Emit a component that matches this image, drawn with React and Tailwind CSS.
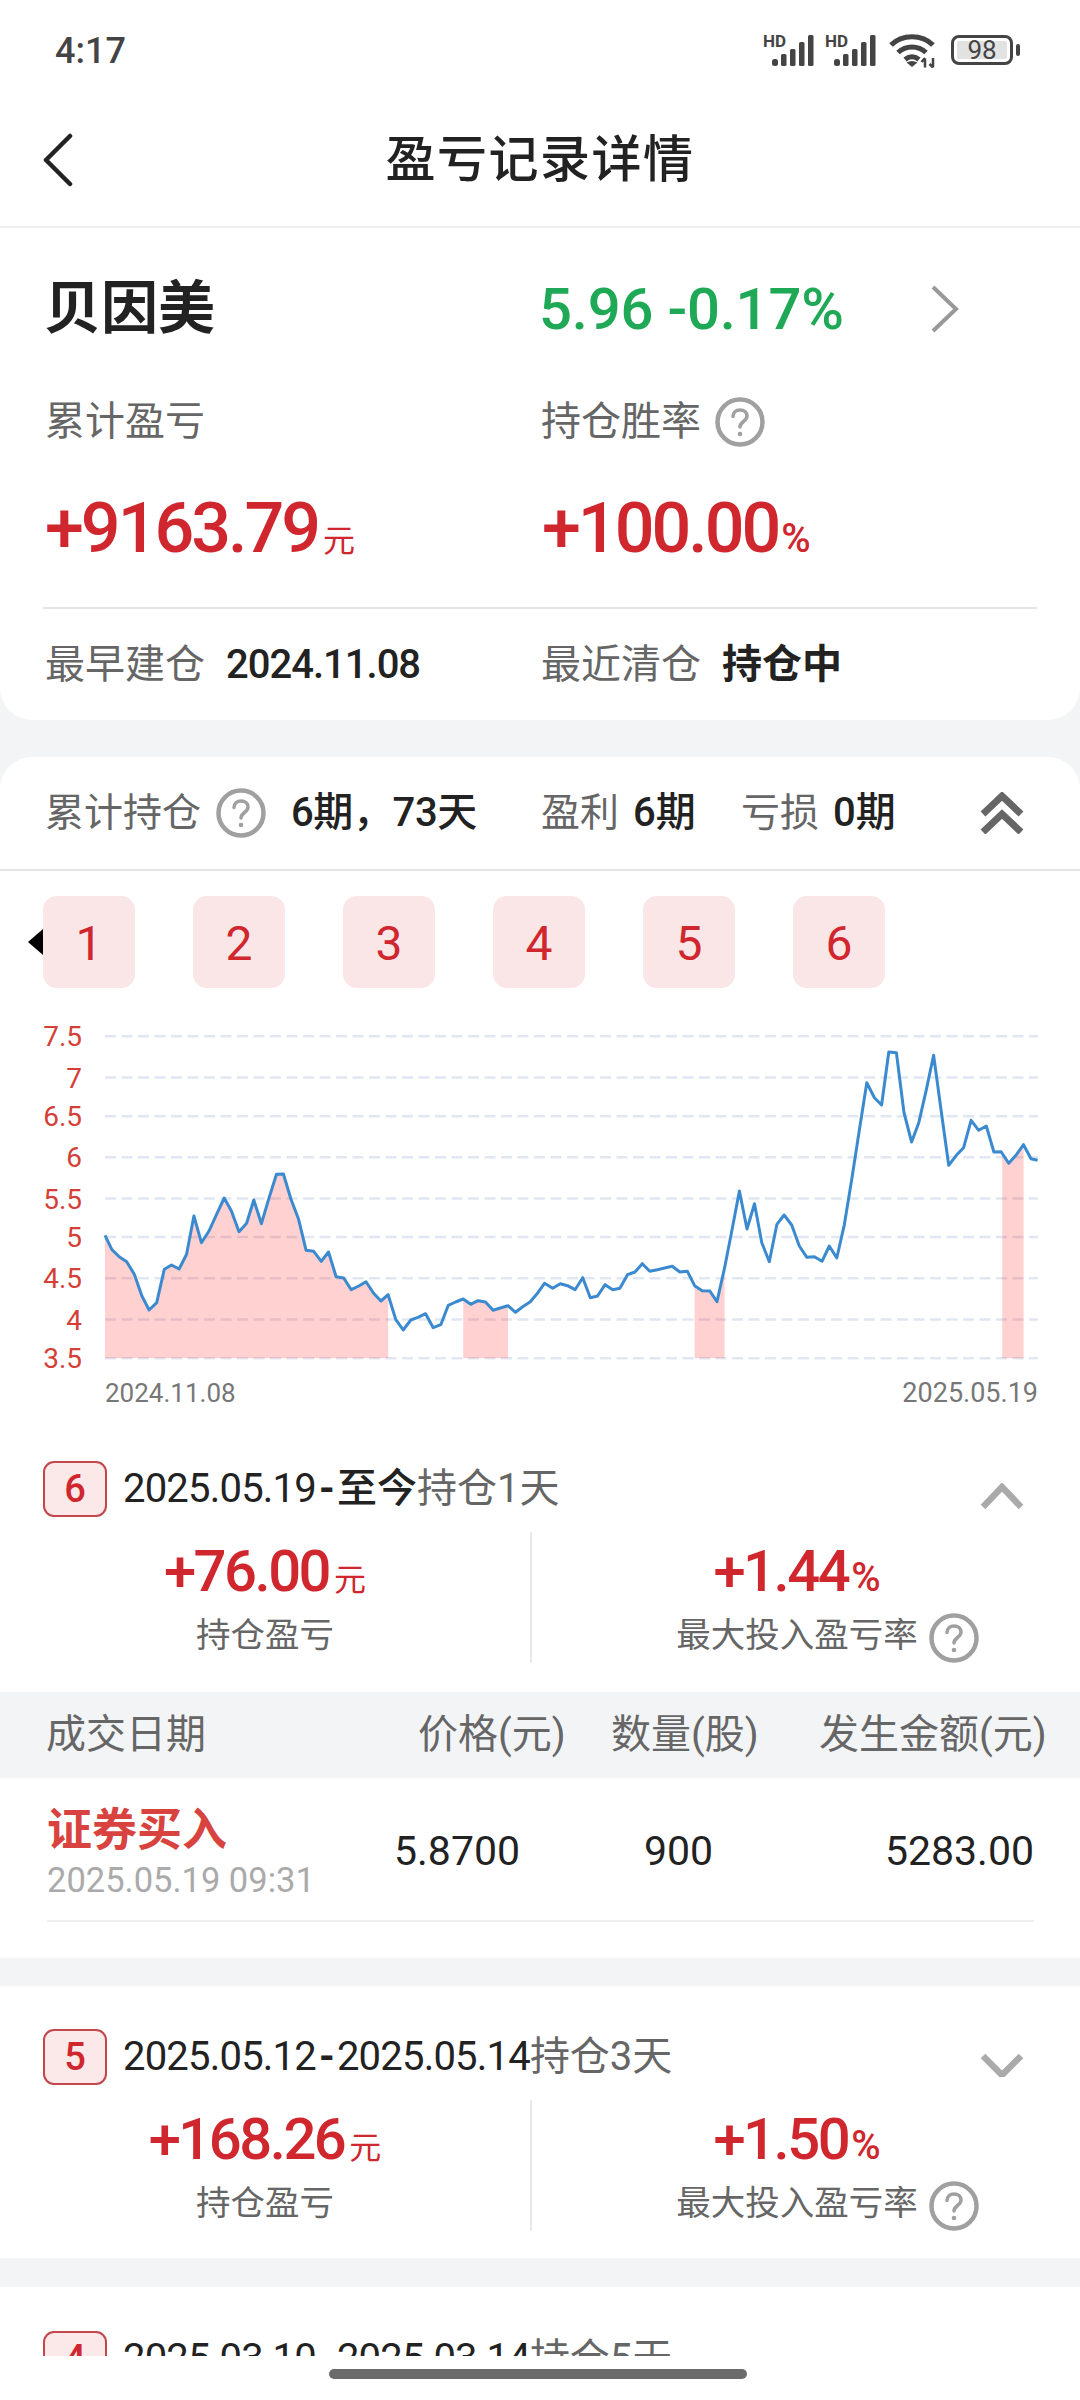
import React from 'react';

const RED = 'text-[#d0262e]';

// 图表数据: [u, v] 是参考图放大坐标，换算成 svg 坐标
const leftPts = [[305,703],[325,746],[347,768],[368,782],[390,820],[412,885],[433,927],[455,905],[477,805],[498,792],[520,804],[542,760],[563,645],[585,725],[607,690],[629,640],[651,591],[672,630],[694,692],[716,667],[737,597],[759,668],[781,592],[803,520],[823,519],[845,595],[867,655],[889,748],[911,751],[933,781],[954,753],[976,827],[998,831],[1020,866],[1042,855],[1063,842],[1085,877],[1106,900],[1127,881],[1149,955],[1171,987],[1193,957],[1214,949],[1236,938],[1258,980],[1280,971],[1302,913],[1323,903],[1345,894],[1367,910],[1388,899],[1410,903],[1432,928],[1453,921],[1475,914],[1497,934],[1518,917],[1540,902],[1562,875]];
const rightPts = [[13,847],[37,862],[59,848],[80,854],[102,866],[124,830],[146,890],[167,885],[189,851],[211,866],[232,862],[254,821],[276,813],[297,788],[319,811],[341,806],[362,801],[384,796],[406,813],[428,811],[449,854],[471,869],[493,870],[514,902],[536,800],[557,690],[579,570],[601,684],[623,608],[644,725],[666,782],[688,670],[709,642],[731,672],[753,735],[775,769],[797,767],[819,781],[840,735],[862,771],[884,670],[906,530],[927,390],[949,245],[971,290],[992,312],[1013,153],[1035,155],[1057,335],[1079,423],[1100,365],[1122,265],[1143,163],[1165,330],[1187,493],[1209,463],[1230,440],[1252,358],[1274,388],[1296,375],[1318,453],[1339,452],[1361,487],[1383,462],[1404,431],[1426,473],[1445,478]];

const toXY = (p, off) => [off + p[0] / 2.904, p[1] / 3];
const line = [...leftPts.map((p) => toXY(p, 0)), ...rightPts.map((p) => toXY(p, 540))];
const fmt = (p) => `${p[0].toFixed(1)},${p[1].toFixed(1)}`;
const linePath = line.map(fmt).join(' ');

const BASE = 357.3;
const gridY = [35.3, 76.6, 115.3, 156.3, 197.6, 236, 277.3, 318.6, 357.3];
const yLabels = ['7.5', '7', '6.5', '6', '5.5', '5', '4.5', '4', '3.5'];

const yAt = (x) => {
  for (let i = 1; i < line.length; i++) {
    if (x <= line[i][0]) {
      const [a, b] = [line[i - 1], line[i]];
      return a[1] + ((x - a[0]) / (b[0] - a[0])) * (b[1] - a[1]);
    }
  }
  return line[line.length - 1][1];
};

// 持仓区间: 两端竖直，上沿沿折线
const area = (x1, x2) => {
  const inside = line.filter((p) => p[0] > x1 && p[0] < x2);
  const top = [[x1, yAt(x1)], ...inside, [x2, yAt(x2)]].map(fmt).join(' ');
  return `${x1},${BASE} ${top} ${x2},${BASE}`;
};
const areas = [area(105, 388.2), area(463.2, 508), area(694.6, 724.6), area(1002.2, 1023.6)];

const Help = ({ className = 'w-[50px] h-[50px]' }) => (
  <svg viewBox="0 0 50 50" className={className} fill="none">
    <circle cx="25" cy="25" r="22.5" stroke="#a0a0a0" strokeWidth="4.500" />
    <path d="M18 19.5c0-4 3-6.500 7-6.500s7 2.500 7 6c0 5.500-7 5.500-7 11" stroke="#a0a0a0" strokeWidth="3.500" strokeLinecap="round" />
    <circle cx="25" cy="37" r="2.300" fill="#a0a0a0" />
  </svg>
);

const Signal = () => (
  <svg viewBox="0 -6 52 40" className="w-[52px] h-[40px]" fill="#444">
    <text x="0" y="14" fontSize="17" fontWeight="700" fontFamily="Roboto, sans-serif">HD</text>
    <rect x="9" y="26" width="6" height="7" rx="2.500" />
    <rect x="18" y="21" width="5.500" height="12" rx="1.500" />
    <rect x="27" y="16" width="5.500" height="17" rx="1.500" />
    <rect x="36" y="9" width="5.500" height="24" rx="1.500" />
    <rect x="45" y="2" width="5.500" height="31" rx="1.500" />
  </svg>
);

const Wifi = () => (
  <svg viewBox="0 0 50 36" className="w-[50px] h-[36px]" fill="none" stroke="#444" strokeWidth="5">
    <path d="M3 13C14 2 34 2 45 13" />
    <path d="M10 20.500c8-7.500 20-7.500 28 0" />
    <path d="M17 27.500c4.500-3.500 9.500-3.500 14 0" />
    <path d="M18.500 30.500c3.500-2 7.500-2 11 0L24 35z" fill="#444" stroke="none" />
    <path d="M37 35.500v-9M33.500 30l3.500-4M45 26v9.500M41.500 32l3.500 3.500" strokeWidth="2.500" />
  </svg>
);

const BackIcon = () => (
  <svg viewBox="0 0 32 54" className="w-[32px] h-[54px]" fill="none" stroke="#222" strokeWidth="4.500" strokeLinecap="round" strokeLinejoin="round">
    <path d="M28 3L4 27l24 24" />
  </svg>
);

const Chevron = ({ dir }) => (
  <svg viewBox="0 0 44 26" className="w-[44px] h-[26px]" fill="none" stroke="#aaa" strokeWidth="6.500" strokeLinejoin="miter">
    <path d={dir === 'up' ? 'M3 24L22 4l19 20' : 'M3 5l19 19L41 5'} />
  </svg>
);

const Stat = ({ value, unit }) => (
  <div className={`flex items-baseline h-[78px] leading-[78px] ${RED}`}>
    <span className="text-[58px] font-medium tracking-[-2.5px]">{value}</span>
    <span className={unit === '%' ? 'text-[40px] font-medium ml-[3px]' : 'text-[32px] ml-[5px]'}>{unit}</span>
  </div>
);

const PeriodHeader = ({ no, from, to, strong, tail, dir }) => (
  <div className="flex items-center pl-[43px] pr-[56px] h-[56px]">
    <div className={`w-[64px] h-[56px] border-2 border-[#c2474c] rounded-[11px] bg-[#fbe8e9] flex items-center justify-center text-[38px] font-medium ${RED}`}>{no}</div>
    <div className="ml-[16px] text-[40px] leading-[56px] text-[#222] flex-1 whitespace-nowrap tracking-[-0.8px]">
      {from}<span className="font-bold mx-[3px]">-</span>{to}<span className="font-medium tracking-normal">{strong}</span><span className="text-[#666] tracking-normal">{tail}</span>
    </div>
    <div className="mt-[14px]"><Chevron dir={dir} /></div>
  </div>
);

const PeriodStats = ({ money, rate }) => (
  <div className="flex mt-[15px] h-[131px]">
    <div className="w-[530px] flex flex-col items-center">
      <Stat value={money} unit="元" />
      <div className="text-[34.5px] leading-[50px] text-[#666]">持仓盈亏</div>
    </div>
    <div className="w-[2px] bg-[#e8e8e8]" />
    <div className="w-[530px] flex flex-col items-center">
      <Stat value={rate} unit="%" />
      <div className="relative text-[34.5px] leading-[50px] text-[#666] whitespace-nowrap">
        最大投入盈亏率
        <div className="absolute left-full ml-[11px] top-[3px]"><Help /></div>
      </div>
    </div>
  </div>
);

const Chart = () => (
  <svg viewBox="0 0 1080 410" className="block w-[1080px] h-[410px] mt-[13px]">
    {gridY.map((y) => (
      <line key={y} x1="105" x2="1038" y1={y} y2={y} stroke="#e1e7f2" strokeWidth="2.500" strokeDasharray="11 5.500" />
    ))}
    {areas.map((pts) => (
      <polygon key={pts} points={pts} fill="#f00" fillOpacity="0.18" />
    ))}
    <polyline points={linePath} fill="none" stroke="#3b8ad0" strokeWidth="3" strokeLinejoin="round" />
    {gridY.map((y, i) => (
      <text key={y} x="82" y={y + 10} textAnchor="end" fontSize="28" fill="#d43f38">{yLabels[i]}</text>
    ))}
    <text x="105" y="401" fontSize="26" fill="#777">2024.11.08</text>
    <text x="1038" y="401" fontSize="27" fill="#777" textAnchor="end">2025.05.19</text>
  </svg>
);

export default function App() {
  return (
    <div className="w-[1080px] h-[2400px] flex flex-col overflow-hidden bg-[#f3f4f6] font-['Roboto','Noto_Sans_CJK_SC',sans-serif]">
      <div className="flex-1 min-h-0 overflow-hidden">
        {/* 状态栏 */}
        <div className="h-[94px] bg-white flex items-center pl-[55px] pr-[60px]">
          <span className="text-[36px] font-medium text-[#444] flex-1 mt-[8px]">4:17</span>
          <div className="flex items-center mt-[6px]">
            <div className="-mt-[6px]"><Signal /></div>
            <div className="ml-[10px] -mt-[6px]"><Signal /></div>
            <div className="ml-[11px]"><Wifi /></div>
            <div className="ml-[13px] w-[62px] h-[30px] border-[3px] border-[#444] rounded-[8px] p-[3px]">
              <div className="w-full h-full bg-[#e2e2e2] rounded-[2px] flex items-center justify-center text-[26px] leading-none text-[#444]">98</div>
            </div>
            <div className="ml-[3px] w-[4px] h-[12px] bg-[#444] rounded-[2px]" />
          </div>
        </div>
        {/* 标题栏 */}
        <div className="relative h-[134px] bg-white border-b-2 border-[#eee] flex items-center justify-center">
          <div className="absolute left-[42px] top-[39px]"><BackIcon /></div>
          <h1 className="text-[50px] font-medium text-[#222] tracking-[1.5px]">盈亏记录详情</h1>
        </div>

        {/* 概览 */}
        <div className="bg-white rounded-b-[32px] pt-[41px] pb-[25px]">
          <div className="flex items-center h-[80px] pl-[44px]">
            <div className="w-[495px] text-[57px] font-bold text-[#222]">贝因美</div>
            <div className="w-[391px] text-[58px] font-medium text-[#1fa855] tracking-[-0.2px]">5.96 -0.17%</div>
            <svg viewBox="0 0 30 48" className="w-[30px] h-[48px]" fill="none" stroke="#999" strokeWidth="4"><path d="M3 2l23 22L3 46" /></svg>
          </div>
          <div className="flex items-center h-[60px] pl-[45px] mt-[43px] text-[40px] text-[#666]">
            <div className="w-[496px]">累计盈亏</div>
            <div>持仓胜率</div>
            <div className="ml-[14px]"><Help /></div>
          </div>
          <div className={`flex items-baseline h-[80px] leading-[80px] pl-[45px] mt-[36px] ${RED}`}>
            <div className="w-[497px]"><span className="text-[70px] font-medium tracking-[-3px]">+9163.79</span><span className="text-[32px] ml-[5px]">元</span></div>
            <div><span className="text-[70px] font-medium tracking-[-3px]">+100.00</span><span className="text-[40px] font-medium ml-[3px]">%</span></div>
          </div>
          <div className="h-[2px] bg-[#e5e5e5] mx-[43px] mt-[39px]" />
          <div className="flex items-center h-[60px] pl-[45px] mt-[26px] text-[40px] text-[#666]">
            <div className="w-[496px] flex">
              <span>最早建仓</span>
              <span className="ml-[21px] text-[#222] font-medium tracking-[-1px]">2024.11.08</span>
            </div>
            <div className="flex">
              <span>最近清仓</span>
              <span className="ml-[21px] text-[#222] font-bold">持仓中</span>
            </div>
          </div>
        </div>

        {/* 持仓明细 */}
        <div className="bg-white rounded-t-[32px] mt-[37px] pb-[36px]">
          <div className="flex items-center h-[114px] border-b-2 border-[#e5e5e5] pl-[45px] text-[39px] text-[#666]">
            <span>累计持仓</span>
            <div className="ml-[15px]"><Help /></div>
            <span className="ml-[25px] w-[250px] text-[40px] text-[#222] font-medium tracking-[-0.4px]">6期，73天</span>
            <span>盈利</span>
            <span className="ml-[14px] w-[108px] text-[40px] text-[#222] font-medium">6期</span>
            <span>亏损</span>
            <span className="ml-[14px] flex-1 text-[40px] text-[#222] font-medium">0期</span>
            <svg viewBox="0 0 44 42" className="w-[44px] h-[42px] mr-[56px]" fill="none" stroke="#666" strokeWidth="7">
              <path d="M3 22L22 4l19 18M3 40l19-18 19 18" />
            </svg>
          </div>

          <div className="flex items-center pl-[28px] mt-[25px]">
            <svg viewBox="0 0 15 26" className="w-[15px] h-[26px]" fill="#000"><path d="M15 0v26L0 13z" /></svg>
            <div className="flex gap-[58px]">
              {[1, 2, 3, 4, 5, 6].map((n) => (
                <div key={n} className={`w-[92px] h-[92px] rounded-[14px] bg-[#fae6e7] flex items-center justify-center text-[48px] pt-[3px] ${RED}`}>{n}</div>
              ))}
            </div>
          </div>

          <Chart />

          <div className="mt-[50px]">
            <PeriodHeader no="6" from="2025.05.19" strong="至今" tail="持仓1天" dir="up" />
            <PeriodStats money="+76.00" rate="+1.44" />
          </div>

          <div className="flex items-center h-[86px] mt-[29px] bg-[#f3f4f6] text-[40px] text-[#666] whitespace-nowrap">
            <span className="ml-[46px] w-[372px]">成交日期</span>
            <span className="w-[142px]">价格(元)</span>
            <span className="ml-[51px] w-[143px]">数量(股)</span>
            <span className="ml-[65px]">发生金额(元)</span>
          </div>
          <div className="flex items-center h-[144px] pt-[6px] ml-[47px] mr-[46px] border-b-2 border-[#eee]">
            <div className="w-[347px]">
              <div className="text-[45px] leading-[52px] font-bold text-[#d8433f]">证券买入</div>
              <div className="text-[34.5px] leading-[40px] text-[#aaa] mt-[3px] whitespace-nowrap">2025.05.19 09:31</div>
            </div>
            <div className="w-[250px] text-[41px] text-[#222]">5.8700</div>
            <div className="text-[41px] text-[#222]">900</div>
            <div className="flex-1 text-right text-[41px] text-[#222]">5283.00</div>
          </div>
        </div>

        <div className="bg-white mt-[28px] pt-[43px] pb-[27px]">
          <PeriodHeader no="5" from="2025.05.12" to="2025.05.14" tail="持仓3天" dir="down" />
          <PeriodStats money="+168.26" rate="+1.50" />
        </div>

        <div className="bg-white mt-[29px] pt-[44px] h-[200px]">
          <PeriodHeader no="4" from="2025.03.10" to="2025.03.14" tail="持仓5天" dir="down" />
        </div>
      </div>

      {/* 底部手势条 */}
      <div className="h-[44px] bg-white flex justify-center pt-[13px]">
        <div className="w-[418px] h-[10px] rounded-full bg-[#6b6b6b] -ml-[4px]" />
      </div>
    </div>
  );
}
